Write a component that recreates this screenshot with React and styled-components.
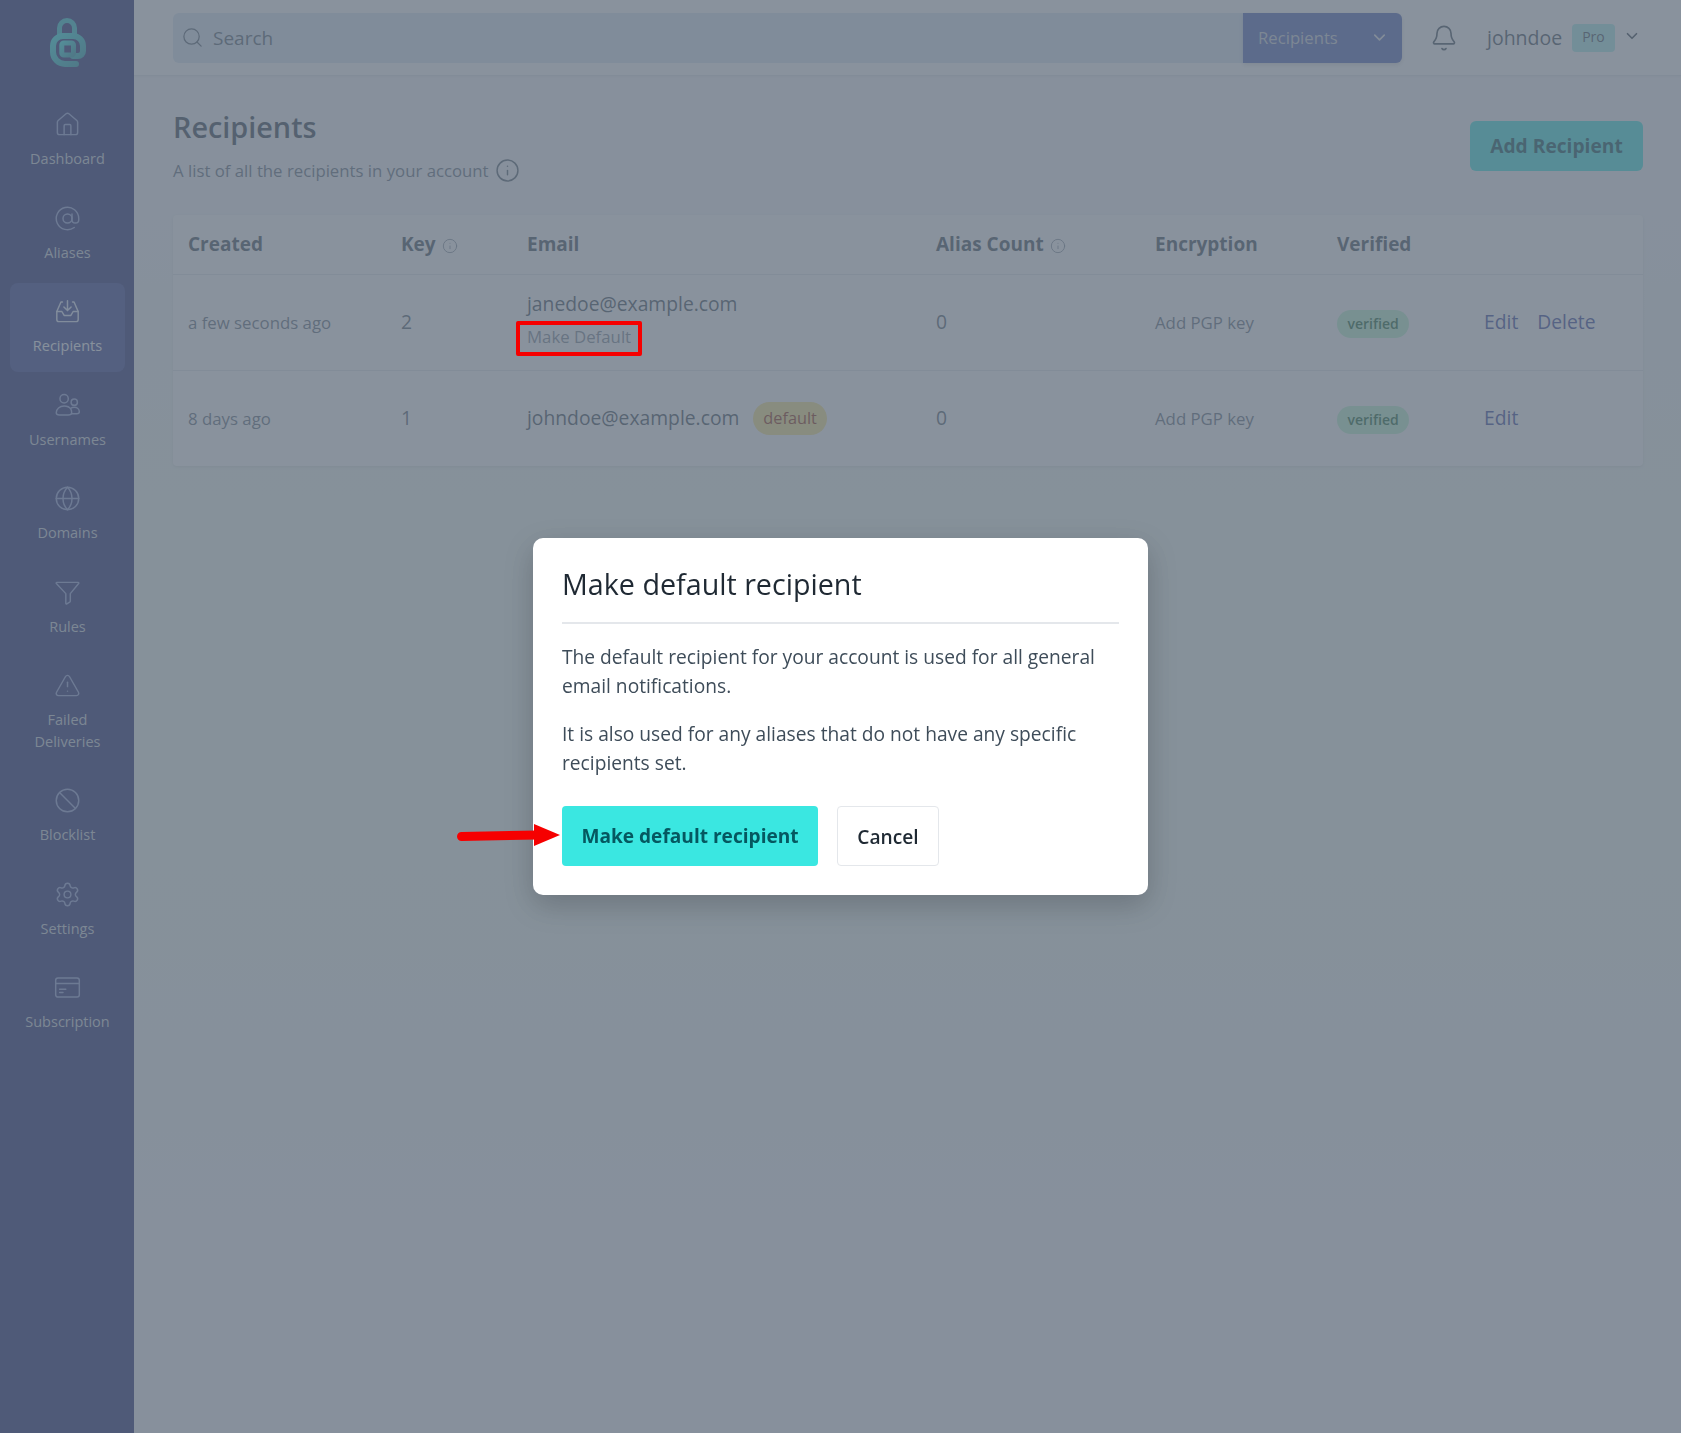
import React from "react";
import styled, { createGlobalStyle } from "styled-components";
import { House, AtSign, Globe, TriangleAlert, Ban, Settings, Bell, Search, ChevronDown, Info } from "lucide-react";

const GlobalStyle = createGlobalStyle`
  * { box-sizing: border-box; }
  html, body { margin: 0; height: 100%; }
  body {
    font-family: "Open Sans", "Liberation Sans", sans-serif;
    background: #f5f7fa;
    color: #3e4c59;
  }
`;

const Shell = styled.div`
  display: flex;
  height: 100vh;
  overflow: hidden;
`;

const Sidebar = styled.aside`
  flex: 0 0 134px;
  min-width: 0;
  background: #19216c;
  padding: 0 9px 0 10px;
`;

const LogoWrap = styled.div`
  display: flex;
  justify-content: center;
  padding-top: 18px;
  height: 96px;
`;

const Nav = styled.nav`
  display: flex;
  flex-direction: column;
  gap: 5px;
`;

const NavItem = styled.a`
  display: flex;
  flex-direction: column;
  align-items: center;
  padding: 15px 0;
  border-radius: 8px;
  background: ${(p) => (p.$active ? "#2d3a8c" : "transparent")};
  color: ${(p) => (p.$active ? "#f5f7fa" : "#cbd2d9")};
  font-size: 14.5px;
  line-height: 21.5px;
  text-align: center;
  svg {
    display: block;
    width: 27px;
    height: 27px;
    margin-bottom: 10px;
    color: ${(p) => (p.$active ? "#e0e8f9" : "#8e9ed8")};
    stroke-width: 1.3;
  }
`;

const NavLabel = styled.span`
  display: block;
  max-width: 100px;
`;

const Main = styled.div`
  flex: 1;
  min-width: 0;
  background: linear-gradient(#f5f7fa 15%, #f1f9f2 35%, #f1f9f2 60%, #f5f7fa 85%);
`;

const Header = styled.header`
  display: flex;
  align-items: center;
  height: 76px;
  padding: 0 39px;
  background: #fff;
  border-bottom: 1px solid #e4e7eb;
  box-shadow: 0 1px 2px rgba(0, 0, 0, 0.05);
`;

const SearchBox = styled.div`
  display: flex;
  flex: 0 0 1229px;
  height: 50px;
`;

const SearchField = styled.label`
  flex: 1;
  display: flex;
  align-items: center;
  gap: 7px;
  padding-left: 8px;
  background: #d9e6f4;
  border-radius: 6px 0 0 6px;
  color: #52606d;
  svg {
    width: 23px;
    height: 23px;
    stroke-width: 1.3;
  }
`;

const SearchInput = styled.input`
  flex: 1;
  border: 0;
  background: none;
  outline: none;
  font: inherit;
  font-size: 19px;
  &::placeholder {
    color: #52606d;
    opacity: 1;
  }
`;

const ScopeSelect = styled.div`
  flex: 0 0 159px;
  display: flex;
  align-items: center;
  justify-content: space-between;
  padding: 0 13px 0 15px;
  background: #4c63b6;
  border-radius: 0 6px 6px 0;
  box-shadow: 0 2px 4px rgba(0, 0, 0, 0.15);
  color: #cbd2d9;
  font-size: 16.7px;
  svg {
    width: 19px;
    height: 19px;
    color: #e4e7eb;
  }
`;

const BellWrap = styled.div`
  display: flex;
  margin-left: 28px;
  color: #3e4c59;
  svg {
    width: 28px;
    height: 28px;
    stroke-width: 1.4;
  }
`;

const UserName = styled.span`
  margin-left: 29px;
  font-size: 19.5px;
  color: #3e4c59;
`;

const ProBadge = styled.span`
  margin-left: 10px;
  padding: 0 10px;
  height: 28px;
  line-height: 25px;
  border-radius: 4px;
  background: #a8f0ec;
  color: #3e4c59;
  font-size: 14px;
`;

const UserCaret = styled.span`
  display: flex;
  margin-left: 8px;
  margin-top: -4px;
  color: #323f4b;
  svg {
    width: 18px;
    height: 18px;
    stroke-width: 2.2;
  }
`;

const Content = styled.main`
  padding: 0 38px 0 39px;
`;

const PageHead = styled.div`
  display: flex;
  justify-content: space-between;
  padding-top: 32px;
  height: 139px;
`;

const PageTitle = styled.h1`
  margin: 0;
  font-size: 28.8px;
  line-height: 38px;
  font-weight: 600;
  color: #323f4b;
`;

const PageSub = styled.p`
  display: flex;
  align-items: center;
  gap: 6px;
  margin: 12px 0 0;
  font-size: 16.75px;
  line-height: 24px;
  color: #616e7c;
  svg {
    width: 25px;
    height: 25px;
    stroke-width: 1.4;
    color: #52606d;
  }
`;

const AddButton = styled.button`
  margin-top: 13px;
  width: 173px;
  height: 50px;
  padding: 0 0 2px;
  border: 0;
  border-radius: 6px;
  background: #3ae7e1;
  color: #044e54;
  font: inherit;
  font-size: 19.2px;
  font-weight: 700;
`;

const Card = styled.div`
  background: #fff;
  border-radius: 4px;
  box-shadow: 0 1px 3px rgba(0, 0, 0, 0.1);
`;

const Table = styled.table`
  width: 100%;
  border-collapse: collapse;
  table-layout: fixed;
`;

const ColA = styled.col`
  width: ${(p) => p.$w}px;
`;

const Th = styled.th`
  height: 59px;
  padding: 0 0 0 15px;
  text-align: left;
  font-size: 19px;
  font-weight: 700;
  color: #3e4c59;
  border-bottom: 1px solid #e4e7eb;
  svg {
    width: 16px;
    height: 16px;
    margin-left: 6px;
    vertical-align: -3px;
    stroke-width: 1.3;
    color: #7b8794;
  }
`;

const Td = styled.td`
  height: 96px;
  padding: 0 0 ${(p) => (p.$big ? "2px" : "0")} 15px;
  vertical-align: middle;
  font-size: ${(p) => (p.$big ? "19.3px" : "16.8px")};
  color: ${(p) => (p.$big ? "#52606d" : "#616e7c")};
  border-bottom: ${(p) => (p.$last ? "0" : "1px solid #e4e7eb")};
`;

const EmailText = styled.div`
  font-size: 19.3px;
  line-height: 27px;
  color: #3e4c59;
`;

const MakeDefault = styled.a`
  position: relative;
  display: inline-block;
  margin-top: 8px;
  margin-bottom: 6px;
  font-size: 16.8px;
  line-height: 24px;
  color: #7b8794;
`;

const RedBox = styled.span`
  position: absolute;
  left: -11px;
  top: -4px;
  width: 126px;
  height: 35px;
  border: 4px solid #f60000;
  border-radius: 2px;
  z-index: 20;
`;

const Pill = styled.span`
  display: inline-block;
  position: relative;
  top: 2px;
  padding: 0 10.5px;
  border-radius: 16px;
  line-height: 28px;
  font-size: 14px;
  font-weight: 600;
  background: #bbf7d0;
  color: #166534;
`;

const DefaultPill = styled.span`
  display: inline-block;
  margin-left: 14px;
  padding: 0 10px;
  border-radius: 17px;
  line-height: 33px;
  font-size: 16.3px;
  background: #fce588;
  color: #8d2b0b;
  vertical-align: 1px;
`;

const ActionLink = styled.a`
  position: relative;
  top: -1px;
  margin-right: 19px;
  font-size: 19.3px;
  color: #35469c;
`;

const Overlay = styled.div`
  position: fixed;
  inset: 0;
  z-index: 10;
  display: flex;
  align-items: center;
  justify-content: center;
  background: rgba(97, 110, 124, 0.75);
`;

const Modal = styled.div`
  position: relative;
  z-index: 11;
  width: 615px;
  padding: 27px 29px 29px;
  background: #fff;
  border-radius: 10px;
  box-shadow: 0 10px 30px rgba(0, 0, 0, 0.2);
`;

const ModalTitle = styled.h2`
  margin: 0;
  padding-bottom: 19px;
  border-bottom: 2px solid #e4e7eb;
  font-size: 28.7px;
  line-height: 38px;
  font-weight: 400;
  color: #1f2933;
`;

const ModalText = styled.p`
  margin: 18px 0 0;
  font-size: 19.2px;
  line-height: 29px;
  color: #3e4c59;
  & + & {
    margin-top: 19px;
  }
`;

const ButtonRow = styled.div`
  position: relative;
  display: flex;
  gap: 19px;
  margin-top: 29px;
`;

const PrimaryButton = styled.button`
  width: 256px;
  height: 60px;
  border: 0;
  border-radius: 4px;
  background: #3ae7e1;
  color: #055860;
  font: inherit;
  font-size: 19.1px;
  font-weight: 700;
`;

const CancelButton = styled.button`
  width: 102px;
  height: 60px;
  border: 1px solid #e4e7eb;
  border-radius: 4px;
  background: #fff;
  color: #1f2933;
  font: inherit;
  font-size: 19.2px;
  font-weight: 600;
`;

const RedArrow = styled.svg`
  position: absolute;
  left: -105px;
  top: 17px;
  width: 103px;
  height: 24px;
`;

const InboxIcon = () => (
  <svg viewBox="0 0 24 24" fill="none" stroke="currentColor" strokeLinecap="round" strokeLinejoin="round">
    <path d="M7.5 3.5H6.2L2.5 12v7a2 2 0 0 0 2 2h15a2 2 0 0 0 2-2v-7l-3.7-8.5h-1.3" />
    <path d="M2.5 12H7l2 3.5h6l2-3.5h4.5" />
    <path d="M12 2.5v8.5M8.8 8l3.2 3.2L15.2 8" />
  </svg>
);

const UsersIcon = () => (
  <svg viewBox="0 0 24 24" fill="none" stroke="currentColor" strokeLinecap="round" strokeLinejoin="round">
    <circle cx="9" cy="6" r="3.7" />
    <circle cx="18" cy="9" r="2.8" />
    <path d="M2 18.5c0-3.5 3-6 7-6 2.6 0 4.8 1 6 2.8.6 1 .7 2 .7 3.2 0 1.500-1.500 2-3.200 2H5c-1.700 0-3-.8-3-2z" />
    <path d="M15 14.500c.8-.7 1.900-1 3-1 2.500 0 4.500 1.700 4.500 4 0 1.200-.8 1.800-2.200 1.800h-4.600" />
  </svg>
);

const FunnelIcon = () => (
  <svg viewBox="0 0 24 24" fill="none" stroke="currentColor" strokeLinecap="round" strokeLinejoin="round">
    <path d="M2.500 3h19c.5 0 .7.500.4 1L14.500 13v6.500c0 .5-.2.8-.6 1.100l-2.500 1.500c-.5.3-.9 0-.9-.5V13L2.100 4c-.3-.5-.1-1 .4-1z" />
  </svg>
);

const CardIcon = () => (
  <svg viewBox="0 0 24 24" fill="none" stroke="currentColor" strokeLinecap="round" strokeLinejoin="round">
    <rect x="1.500" y="3.500" width="21" height="17" rx="2" />
    <path d="M1.500 8.500h21M5 13.500h5.500M5 16.500h3" />
  </svg>
);

const Logo = () => (
  <svg width="38" height="50" viewBox="0 0 38 50" fill="none">
    <defs>
      <linearGradient id="lg" x1="0" y1="0" x2="1" y2="1">
        <stop offset="0" stopColor="#2ce6e6" />
        <stop offset="1" stopColor="#1c9aa8" />
      </linearGradient>
    </defs>
    <path d="M10.500 17V10A7.500 7.500 0 0 1 25.500 10V17" stroke="#2ac4cc" strokeWidth="5" strokeLinecap="round" />
    <path
      d="M27 46H16A12 12 0 0 1 4 34V28A10 10 0 0 1 14 18H24A10 10 0 0 1 34 28V33A5 5 0 0 1 29 38H24"
      stroke="url(#lg)"
      strokeWidth="6"
      strokeLinecap="round"
      strokeLinejoin="round"
    />
    <rect x="12.800" y="25" width="11.700" height="12" rx="2" stroke="url(#lg)" strokeWidth="5" />
  </svg>
);

const navItems = [
  { label: "Dashboard", icon: <House /> },
  { label: "Aliases", icon: <AtSign /> },
  { label: "Recipients", icon: <InboxIcon />, active: true },
  { label: "Usernames", icon: <UsersIcon /> },
  { label: "Domains", icon: <Globe /> },
  { label: "Rules", icon: <FunnelIcon /> },
  { label: "Failed Deliveries", icon: <TriangleAlert /> },
  { label: "Blocklist", icon: <Ban /> },
  { label: "Settings", icon: <Settings /> },
  { label: "Subscription", icon: <CardIcon /> },
];

const widths = [213, 126, 409, 219, 182, 147];

export default function App() {
  return (
    <>
      <GlobalStyle />
      <Shell>
        <Sidebar>
          <LogoWrap>
            <Logo />
          </LogoWrap>
          <Nav>
            {navItems.map((item) => (
              <NavItem key={item.label} $active={item.active}>
                {item.icon}
                <NavLabel>{item.label}</NavLabel>
              </NavItem>
            ))}
          </Nav>
        </Sidebar>
        <Main>
          <Header>
            <SearchBox>
              <SearchField>
                <Search />
                <SearchInput placeholder="Search" />
              </SearchField>
              <ScopeSelect>
                Recipients
                <ChevronDown />
              </ScopeSelect>
            </SearchBox>
            <BellWrap>
              <Bell />
            </BellWrap>
            <UserName>johndoe</UserName>
            <ProBadge>Pro</ProBadge>
            <UserCaret>
              <ChevronDown />
            </UserCaret>
          </Header>
          <Content>
            <PageHead>
              <div>
                <PageTitle>Recipients</PageTitle>
                <PageSub>
                  A list of all the recipients in your account
                  <Info />
                </PageSub>
              </div>
              <AddButton>Add Recipient</AddButton>
            </PageHead>
            <Card>
              <Table>
                <colgroup>
                  {widths.map((w, i) => (
                    <ColA key={i} $w={w} />
                  ))}
                  <col />
                </colgroup>
                <thead>
                  <tr>
                    <Th>Created</Th>
                    <Th>
                      Key
                      <Info />
                    </Th>
                    <Th>Email</Th>
                    <Th>
                      Alias Count
                      <Info />
                    </Th>
                    <Th>Encryption</Th>
                    <Th>Verified</Th>
                    <Th />
                  </tr>
                </thead>
                <tbody>
                  <tr>
                    <Td>a few seconds ago</Td>
                    <Td $big>2</Td>
                    <Td>
                      <EmailText>janedoe@example.com</EmailText>
                      <MakeDefault>
                        Make Default
                        <RedBox />
                      </MakeDefault>
                    </Td>
                    <Td $big>0</Td>
                    <Td>Add PGP key</Td>
                    <Td>
                      <Pill>verified</Pill>
                    </Td>
                    <Td>
                      <ActionLink>Edit</ActionLink>
                      <ActionLink>Delete</ActionLink>
                    </Td>
                  </tr>
                  <tr>
                    <Td $last>8 days ago</Td>
                    <Td $last $big>1</Td>
                    <Td $last>
                      <EmailText>
                        johndoe@example.com
                        <DefaultPill>default</DefaultPill>
                      </EmailText>
                    </Td>
                    <Td $last $big>0</Td>
                    <Td $last>Add PGP key</Td>
                    <Td $last>
                      <Pill>verified</Pill>
                    </Td>
                    <Td $last>
                      <ActionLink>Edit</ActionLink>
                    </Td>
                  </tr>
                </tbody>
              </Table>
            </Card>
          </Content>
        </Main>
      </Shell>
      <Overlay>
        <Modal>
          <ModalTitle>Make default recipient</ModalTitle>
          <ModalText>The default recipient for your account is used for all general email notifications.</ModalText>
          <ModalText>It is also used for any aliases that do not have any specific recipients set.</ModalText>
          <ButtonRow>
            <RedArrow viewBox="0 0 103 24">
              <path d="M4.500 9L80 7.500V16.500L4.500 18A4.500 4.500 0 0 1 4.500 9z" fill="#f60000" />
              <path d="M77 1L103 12L77 23z" fill="#f60000" />
            </RedArrow>
            <PrimaryButton>Make default recipient</PrimaryButton>
            <CancelButton>Cancel</CancelButton>
          </ButtonRow>
        </Modal>
      </Overlay>
    </>
  );
}
